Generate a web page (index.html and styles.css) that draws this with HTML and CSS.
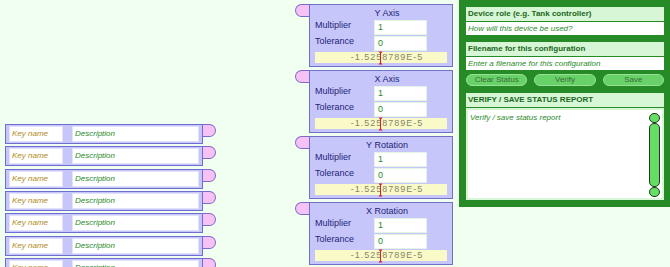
FILE: index.html
```html
<!DOCTYPE html>
<html lang="en">
<head>
    <meta charset="UTF-8">
    <title>Device configuration</title>
    <link rel="stylesheet" href="styles.css">
</head>
<body>
<div class="page">

    <!-- key / description rows -->
    <div class="keys">
        <div class="key-row">
            <div class="key-box"><div class="field key">Key name</div><div class="field desc">Description</div></div>
            <div class="key-tab"></div>
        </div>
        <div class="key-row">
            <div class="key-box"><div class="field key">Key name</div><div class="field desc">Description</div></div>
            <div class="key-tab"></div>
        </div>
        <div class="key-row">
            <div class="key-box"><div class="field key">Key name</div><div class="field desc">Description</div></div>
            <div class="key-tab"></div>
        </div>
        <div class="key-row">
            <div class="key-box"><div class="field key">Key name</div><div class="field desc">Description</div></div>
            <div class="key-tab"></div>
        </div>
        <div class="key-row">
            <div class="key-box"><div class="field key">Key name</div><div class="field desc">Description</div></div>
            <div class="key-tab"></div>
        </div>
        <div class="key-row">
            <div class="key-box"><div class="field key">Key name</div><div class="field desc">Description</div></div>
            <div class="key-tab"></div>
        </div>
        <div class="key-row">
            <div class="key-box"><div class="field key">Key name</div><div class="field desc">Description</div></div>
            <div class="key-tab"></div>
        </div>
    </div>

    <!-- axis blocks -->
    <div class="axes">
        <div class="axis">
            <div class="axis-tab"></div>
            <div class="axis-box">
                <div class="axis-title">Y Axis</div>
                <div class="axis-row"><span class="axis-label">Multiplier</span><span class="axis-input">1</span></div>
                <div class="axis-row"><span class="axis-label">Tolerance</span><span class="axis-input">0</span></div>
                <div class="axis-value">-1.5258789E-5<svg class="marker" width="5" height="14" viewBox="0 0 5 14"><path d="M0.5 0.5H4.5L2.5 3Z M0.5 13.5H4.5L2.5 11Z" fill="#e02020"/><rect x="2" y="1" width="1" height="12" fill="#e02020"/></svg></div>
            </div>
        </div>
        <div class="axis">
            <div class="axis-tab"></div>
            <div class="axis-box">
                <div class="axis-title">X Axis</div>
                <div class="axis-row"><span class="axis-label">Multiplier</span><span class="axis-input">1</span></div>
                <div class="axis-row"><span class="axis-label">Tolerance</span><span class="axis-input">0</span></div>
                <div class="axis-value">-1.5258789E-5<svg class="marker" width="5" height="14" viewBox="0 0 5 14"><path d="M0.5 0.5H4.5L2.5 3Z M0.5 13.5H4.5L2.5 11Z" fill="#e02020"/><rect x="2" y="1" width="1" height="12" fill="#e02020"/></svg></div>
            </div>
        </div>
        <div class="axis">
            <div class="axis-tab"></div>
            <div class="axis-box">
                <div class="axis-title">Y Rotation</div>
                <div class="axis-row"><span class="axis-label">Multiplier</span><span class="axis-input">1</span></div>
                <div class="axis-row"><span class="axis-label">Tolerance</span><span class="axis-input">0</span></div>
                <div class="axis-value">-1.5258789E-5<svg class="marker" width="5" height="14" viewBox="0 0 5 14"><path d="M0.5 0.5H4.5L2.5 3Z M0.5 13.5H4.5L2.5 11Z" fill="#e02020"/><rect x="2" y="1" width="1" height="12" fill="#e02020"/></svg></div>
            </div>
        </div>
        <div class="axis">
            <div class="axis-tab"></div>
            <div class="axis-box">
                <div class="axis-title">X Rotation</div>
                <div class="axis-row"><span class="axis-label">Multiplier</span><span class="axis-input">1</span></div>
                <div class="axis-row"><span class="axis-label">Tolerance</span><span class="axis-input">0</span></div>
                <div class="axis-value">-1.5258789E-5<svg class="marker" width="5" height="14" viewBox="0 0 5 14"><path d="M0.5 0.5H4.5L2.5 3Z M0.5 13.5H4.5L2.5 11Z" fill="#e02020"/><rect x="2" y="1" width="1" height="12" fill="#e02020"/></svg></div>
            </div>
        </div>
    </div>

    <!-- device settings -->
    <div class="device">
        <div class="dev-head">Device role (e.g. Tank controller)</div>
        <div class="dev-input">How will this device be used?</div>

        <div class="dev-head second">Filename for this configuration</div>
        <div class="dev-input">Enter a filename for this configuration</div>

        <div class="dev-buttons">
            <button class="dev-btn">Clear Status</button>
            <button class="dev-btn">Verify</button>
            <button class="dev-btn">Save</button>
        </div>

        <div class="dev-head report-head">VERIFY / SAVE STATUS REPORT</div>
        <div class="report">
            <div class="report-text">Verify / save status report</div>
            <div class="scroll">
                <div class="scroll-cap"></div>
                <div class="scroll-bar"></div>
                <div class="scroll-cap"></div>
            </div>
        </div>
    </div>

</div>
</body>
</html>
```

FILE: styles.css
```css
body {
    margin: 0;
    padding: 0;
    background-color: #f0fff0;
    font-family: "Liberation Sans", Arial, sans-serif;
    overflow: hidden;
    height: 267px;
}

.page {
    display: flex;
    align-items: flex-start;
}

/* key rows */
.keys {
    margin: 124px 0 0 5px;
    width: 211px;
}

.key-row {
    display: flex;
    align-items: flex-start;
    height: 20px;
    margin-bottom: 2.33px;
}

.key-box {
    box-sizing: border-box;
    width: 198px;
    height: 20px;
    display: flex;
    gap: 9px;
    padding: 1px 3px;
    background: #c6c6fa;
    border: 1px solid #6e6ed2;
}

.field {
    box-sizing: border-box;
    height: 16px;
    background: #fff;
    border: 1px solid #e2e2fc;
    padding-left: 2px;
    font-size: 8px;
    font-style: italic;
    line-height: 13px;
    white-space: nowrap;
}

.field.key {
    width: 54px;
    color: #b08a18;
}

.field.desc {
    flex: 1;
    color: #2a8a2a;
}

.key-tab {
    box-sizing: border-box;
    width: 13px;
    height: 13px;
    background: #f6c2f6;
    border: 1px solid #7e68c8;
    border-left: none;
    border-radius: 0 7px 7px 0;
}

/* axis blocks */
.axes {
    margin: 4px 0 0 79px;
}

.axis {
    display: flex;
    align-items: flex-start;
    margin-bottom: 3px;
}

.axis-tab {
    box-sizing: border-box;
    width: 14px;
    height: 13px;
    background: #f6c2f6;
    border: 1px solid #7e68c8;
    border-right: none;
    border-radius: 7px 0 0 7px;
}

.axis-box {
    box-sizing: border-box;
    width: 144px;
    height: 63px;
    padding: 0 5px 3px 5px;
    background: #c6c6fa;
    border: 1px solid #7070c8;
    color: #1e1e78;
    font-size: 9px;
}

.axis-title {
    height: 15px;
    line-height: 16px;
    text-align: center;
    padding-left: 12px;
}

.axis-row {
    display: flex;
    height: 16px;
}

.axis-label {
    width: 59px;
    line-height: 11px;
}

.axis-input {
    box-sizing: border-box;
    width: 53px;
    height: 15px;
    background: #fff;
    border: 1px solid #e4f4e4;
    padding-left: 3px;
    line-height: 13px;
    color: #2a8a2a;
}

.axis-value {
    position: relative;
    height: 11px;
    line-height: 11px;
    background: #fafac8;
    color: #86866a;
    text-align: center;
    padding-left: 12px;
    letter-spacing: 1px;
}

.marker {
    position: absolute;
    left: 63px;
    top: -1px;
}

/* device panel */
.device {
    box-sizing: border-box;
    width: 211px;
    height: 207px;
    margin-left: 6px;
    padding: 7px 6px 0 7px;
    background: #268a26;
    font-size: 8px;
}

.dev-head {
    height: 14px;
    line-height: 14px;
    padding-left: 2px;
    background: #d6f6d6;
    color: #1a661a;
    font-weight: bold;
    white-space: nowrap;
}

.dev-head.second {
    margin-top: 7px;
}

.dev-input {
    height: 13px;
    line-height: 13px;
    margin-top: 1px;
    padding-left: 2px;
    background: #fff;
    color: #2a8a2a;
    font-style: italic;
    white-space: nowrap;
}

.dev-buttons {
    display: flex;
    gap: 7px;
    margin-top: 4px;
}

.dev-btn {
    flex: 1;
    height: 12px;
    padding: 0;
    background: #68d268;
    border: 1px solid #94e294;
    border-radius: 6px;
    color: #3a6a3a;
    font-family: "Liberation Sans", Arial, sans-serif;
    font-size: 8px;
    line-height: 10px;
}

.dev-head.report-head {
    margin-top: 7px;
}

.report {
    box-sizing: border-box;
    display: flex;
    height: 92px;
    margin-top: 1px;
    background: #fff;
    border: 2px solid #d6f6d6;
}

.report-text {
    flex: 1;
    padding: 3px 2px;
    color: #2a8a2a;
    font-style: italic;
}

.scroll {
    display: flex;
    flex-direction: column;
    width: 11px;
    margin: 3px 2px 0 0;
}

.scroll-cap,
.scroll-bar {
    box-sizing: border-box;
    background: #66dd66;
    border: 1px solid #1c3c1c;
    border-radius: 5px;
}

.scroll-cap {
    height: 10px;
}

.scroll-bar {
    height: 64px;
}
```
